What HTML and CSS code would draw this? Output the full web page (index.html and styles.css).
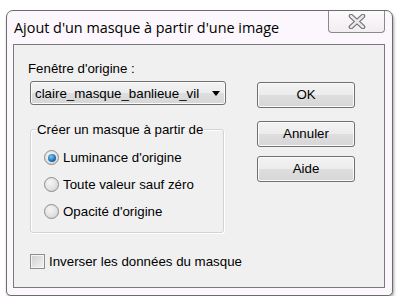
FILE: index.html
```html
<!DOCTYPE html>
<html>
<head>
    <meta charset="UTF-8">
    <title>Ajout d'un masque à partir d'une image</title>
    <link rel="stylesheet" href="styles.css">
</head>
<body>
<div class="fenetre">
    <div class="titre">
        <span class="titreTexte">Ajout d'un masque à partir d'une image</span>
        <div class="fermer">
            <svg width="18" height="15" viewBox="0 0 18 15">
                <path d="M3 2 L15 13 M15 2 L3 13" stroke="#6f6f6f" stroke-width="4.6" stroke-linecap="round"/>
                <path d="M3 2 L15 13 M15 2 L3 13" stroke="#e9e9e9" stroke-width="2.4" stroke-linecap="round"/>
            </svg>
        </div>
    </div>
    <div class="client">
        <div class="gauche">
            <div class="etiquette">Fenêtre d'origine :</div>
            <div class="liste">
                <span>claire_masque_banlieue_vil</span>
                <span class="fleche"></span>
            </div>

            <fieldset class="groupe">
                <legend>Créer un masque à partir de</legend>
                <div class="option"><span class="radio coche"></span>Luminance d'origine</div>
                <div class="option"><span class="radio"></span>Toute valeur sauf zéro</div>
                <div class="option"><span class="radio"></span>Opacité d'origine</div>
            </fieldset>

            <div class="case"><span class="carre"></span>Inverser les données du masque</div>
        </div>
        <div class="droite">
            <div class="bouton defaut">OK</div>
            <div class="bouton">Annuler</div>
            <div class="bouton">Aide</div>
        </div>
    </div>
</div>
</body>
</html>
```

FILE: styles.css
```css
body{
    margin: 0;
    background: #ffffff;
    font-family: "Liberation Sans", Arial, sans-serif;
    font-size: 13.3px;
    color: #000000;
}
.fenetre{
    margin: 10px 0 0 6px;
    width: 385px;
    height: 284px;
    border: 1px solid #6c6c6c;
    border-radius: 7px 7px 5px 5px;
    background: #fcf7fc;
    box-shadow: 1px 2px 3px rgba(0,0,0,0.35);
}
.titre{
    display: flex;
    justify-content: space-between;
    align-items: flex-start;
    height: 33px;
}
.titreTexte{
    font-family: "Open Sans", "Liberation Sans", sans-serif;
    font-size: 14.4px;
    padding: 7px 0 0 7px;
}
.fermer{
    width: 55px;
    height: 21px;
    margin-right: 7px;
    border: 1px solid #8a8a8a;
    border-top: none;
    border-radius: 0 0 4px 4px;
    background: linear-gradient(#fdfafd, #f1edf1);
    display: flex;
    justify-content: center;
    align-items: center;
}
.client{
    display: flex;
    margin: 0 7px 7px 6px;
    height: 242px;
    border: 1px solid #7a7a7a;
    background: #f0f0f0;
}
.gauche{
    width: 196px;
    padding: 16px 0 0 16px;
}
.etiquette{
    margin-left: -2px;
    line-height: 15px;
}
.liste{
    display: flex;
    justify-content: space-between;
    align-items: center;
    margin-top: 5px;
    height: 22px;
    padding: 0 5px 0 4px;
    border: 1px solid #707070;
    border-radius: 3px;
    background: linear-gradient(#f3f3f3, #ececec 50%, #dedede 51%, #d6d6d6);
    box-shadow: inset 0 0 0 1px #fbfbfb;
}
.fleche{
    width: 0;
    height: 0;
    border-left: 4px solid transparent;
    border-right: 4px solid transparent;
    border-top: 5px solid #000000;
}
.groupe{
    margin: 17px 2px 0 0;
    padding: 7px 0 7px 13px;
    border: 1px solid #d3d3d3;
    border-radius: 3px;
    box-shadow: inset 1px 1px 0 #ffffff, 1px 1px 0 #ffffff;
}
.groupe legend{
    margin-left: -8px;
    padding: 0 1px;
    line-height: 15px;
}
.option{
    display: flex;
    align-items: center;
    height: 27px;
}
.radio{
    flex-shrink: 0;
    width: 13px;
    height: 13px;
    margin-right: 4px;
    border: 1px solid #8b8b8b;
    border-radius: 50%;
    background: radial-gradient(circle at 40% 35%, #f6f6f6, #dcdcdc 70%, #cfcfcf);
    display: flex;
    justify-content: center;
    align-items: center;
}
.coche::after{
    content: "";
    width: 8px;
    height: 8px;
    border-radius: 50%;
    background: radial-gradient(circle at 40% 35%, #7ac8f2, #1b6fb0 60%, #0d4a80);
}
.case{
    display: flex;
    align-items: center;
    margin: 20px -40px 0 0;
    height: 16px;
    white-space: nowrap;
}
.carre{
    flex-shrink: 0;
    width: 13px;
    height: 13px;
    margin-right: 4px;
    border: 1px solid #8e8e8e;
    background: linear-gradient(135deg, #d0d0d0, #f2f2f2);
    box-shadow: inset 0 0 0 1px #f4f4f4;
}
.droite{
    width: 98px;
    margin: 37px 0 0 31px;
}
.bouton{
    height: 24px;
    line-height: 24px;
    text-align: center;
    border: 1px solid #707070;
    border-radius: 3px;
    background: linear-gradient(#f3f3f3, #ececec 50%, #dedede 51%, #d6d6d6);
    box-shadow: inset 0 0 0 1px #fbfbfb;
    margin-bottom: 9px;
}
.defaut{
    margin-bottom: 13px;
}
```
